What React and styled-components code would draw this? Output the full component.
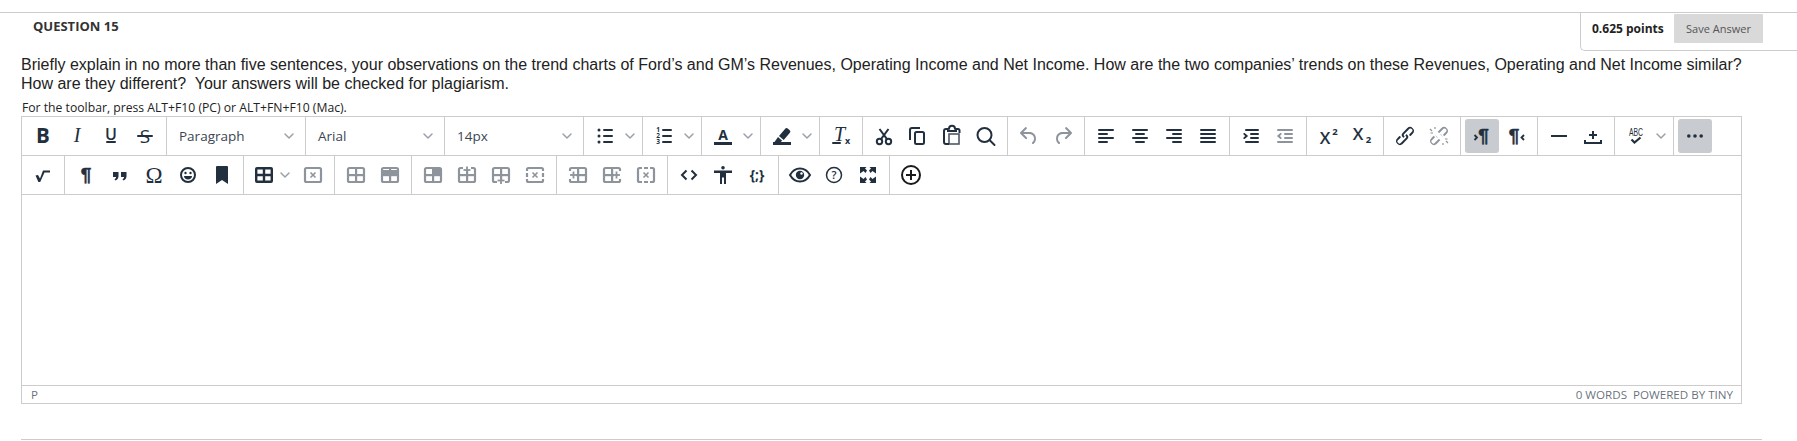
import styled, { createGlobalStyle } from 'styled-components'

const GlobalStyle = createGlobalStyle`
  html, body {
    margin: 0;
    padding: 0;
    background: #fff;
  }
`

const Page = styled.div`
  width: 1797px;
  height: 441px;
  padding-top: 12px;
  box-sizing: border-box;
  overflow: hidden;
  font-family: 'Open Sans', sans-serif;
`
const Header = styled.div`
  display: flex;
  justify-content: space-between;
  height: 38px;
  border-top: 1px solid #ccc;
`
const Title = styled.h3`
  margin: 4px 0 0 33px;
  font-size: 13px;
  line-height: 18px;
  font-weight: 700;
  color: #333;
`
const Points = styled.div`
  display: flex;
  align-items: flex-start;
  width: 217px;
  box-sizing: border-box;
  height: 38px;
  padding: 1px 0 0 11px;
  border-left: 1px solid #ccc;
  border-bottom: 1px solid #ccc;
  border-bottom-left-radius: 5px;
`
const PointsText = styled.span`
  width: 82px;
  font-size: 12px;
  font-weight: 700;
  line-height: 29px;
  color: #222;
  white-space: nowrap;
`
const SaveButton = styled.button`
  width: 89px;
  height: 29px;
  padding: 0;
  border: 0;
  border-radius: 1px;
  background: #d9d9d9;
  color: #555;
  font-family: inherit;
  font-size: 11px;
`
const Content = styled.div`
  padding-left: 22px;
`
const Question = styled.p`
  margin: 4px 0 0 -1px;
  width: 1723px;
  font-family: 'Liberation Sans', Arial, sans-serif;
  font-size: 16px;
  line-height: 19px;
  color: #222;
`
const Hint = styled.div`
  margin-top: 6px;
  font-size: 12.2px;
  line-height: 17px;
  color: #222;
`
const Editor = styled.div`
  width: 1721px;
  margin-left: -1px;
  box-sizing: border-box;
  border: 1px solid #ccc;
`
const Row = styled.div`
  display: flex;
  height: 38px;
  border-bottom: 1px solid #ccc;
`
const Group = styled.div`
  display: flex;
  flex: none;
  padding: 0 4px;
  border-right: ${p => (p.$last ? '0' : '1px solid #ccc')};
`
const ToolButton = styled.div`
  display: flex;
  align-items: center;
  justify-content: center;
  width: ${p => (p.$tight ? 32 : 34)}px;
  height: 34px;
  margin-top: 2px;
  border-radius: 3px;
  background: ${p => (p.$active ? '#c8cbcf' : 'transparent')};
  color: ${p => (p.$muted ? '#8e949b' : p.$ink || '#222f3e')};
`
const SplitArrow = styled.div`
  display: flex;
  align-items: center;
  justify-content: ${p => (p.$tight ? 'flex-start' : 'center')};
  width: 16px;
  height: 34px;
  margin-top: 2px;
  color: rgba(34, 47, 62, 0.45);
`
const Select = styled.div`
  display: flex;
  align-items: center;
  justify-content: space-between;
  width: 130px;
  height: 34px;
  margin-top: 2px;
  padding: 0 7px 0 8px;
  box-sizing: border-box;
  font-size: 13.5px;
  color: #3b4652;
`
const SelectArrow = styled.span`
  color: rgba(34, 47, 62, 0.45);
`
const EditArea = styled.div`
  height: 190px;
  border-bottom: 1px solid #ccc;
`
const StatusBar = styled.div`
  display: flex;
  justify-content: space-between;
  align-items: center;
  height: 17px;
  padding: 0 8px 0 9px;
  font-size: 11.6px;
  color: rgba(34, 47, 62, 0.7);
`
const BottomRule = styled.div`
  width: 1741px;
  margin: 35px 0 0 21px;
  border-top: 1px solid #ccc;
`
const Svg = styled.svg`
  display: block;
  width: ${p => p.$w || 24}px;
  height: ${p => p.$h || 24}px;
  fill: currentColor;
  overflow: visible;
`

const bars = list => list.map(([x, y, w], i) => <rect key={i} x={x} y={y} width={w} height={2} rx={1} />)
const OPEN = "'Open Sans', sans-serif"
const SERIF = "'Liberation Serif', serif"
const ARIAL = "'Liberation Sans', sans-serif"

const grid = (extra, skipH, skipV) => (
  <>
    <rect x="4" y="5" width="16" height="14" rx="1.5" fill="none" stroke="currentColor" strokeWidth="2.2" />
    {!skipH && <rect x="4" y="11" width="16" height="2.2" />}
    {!skipV && <rect x="11" y="5" width="2.2" height="14" />}
    {extra}
  </>
)
const gap = (x, y, w, h) => <rect x={x} y={y} width={w} height={h} fill="#fff" />
const plus = (x, y) => (
  <>
    <rect x={x - 3.5} y={y - 0.9} width="7" height="1.8" />
    <rect x={x - 0.9} y={y - 3.5} width="1.8" height="7" />
  </>
)
const cross = (x, y) => <path d={`M${x - 2.5} ${y - 2.5}l5 5m0-5l-5 5`} stroke="currentColor" strokeWidth="1.6" fill="none" />
const LINK = 'M6.2 12.3a1 1 0 0 1 1.4 1.4l-2.1 2a2 2 0 1 0 2.7 2.8l4.8-4.8a1 1 0 0 0 0-1.4 1 1 0 1 1 1.4-1.3 2.9 2.9 0 0 1 0 4L9.6 20a3.9 3.9 0 0 1-5.5-5.5l2-2.2zm11.6-.6a1 1 0 0 1-1.4-1.4l2-2a2 2 0 1 0-2.6-2.8L11 10.3a1 1 0 0 0 0 1.4A1 1 0 1 1 9.6 13a2.9 2.9 0 0 1 0-4L14.4 4a3.9 3.9 0 0 1 5.5 5.5l-2 2.2z'
const UNDO = 'M6.4 8H12c3.7 0 6.2 2 6.8 5.1.6 2.7-.4 5.6-2.3 6.8a1 1 0 0 1-1-1.8c1.1-.7 1.8-2.7 1.4-4.6-.5-2.1-2.1-3.5-4.9-3.5H6.4l3.3 3.3a1 1 0 1 1-1.4 1.4l-5-5a1 1 0 0 1 0-1.4l5-5a1 1 0 0 1 1.4 1.4L6.4 8z'

const pilcrow = x => (
  <text x={x} y="18" textAnchor="middle" fontFamily={ARIAL} fontWeight="700" fontSize="19" stroke="currentColor" strokeWidth="0.5">¶</text>
)

const icons = {
  bold: <text x="12" y="19" textAnchor="middle" fontFamily={OPEN} fontWeight="700" fontSize="20.5">B</text>,
  italic: <text x="12" y="18" textAnchor="middle" fontFamily={SERIF} fontStyle="italic" fontSize="20">I</text>,
  underline: (
    <>
      <text x="12" y="16" textAnchor="middle" fontFamily={OPEN} fontWeight="600" fontSize="16">U</text>
      {bars([[7, 17, 10]])}
    </>
  ),
  strike: (
    <>
      <text x="12" y="18.5" textAnchor="middle" fontFamily={OPEN} fontSize="19">S</text>
      {bars([[4, 11, 16]])}
    </>
  ),
  bullist: (
    <>
      {bars([[10, 5, 10], [10, 11, 10], [10, 17, 10]])}
      <circle cx="6" cy="6" r="1.5" />
      <circle cx="6" cy="12" r="1.5" />
      <circle cx="6" cy="18" r="1.5" />
    </>
  ),
  numlist: (
    <>
      {bars([[10, 5, 10], [10, 11, 10], [10, 17, 10]])}
      <text x="6" y="8" textAnchor="middle" fontFamily={OPEN} fontWeight="700" fontSize="6.5">1</text>
      <text x="6" y="14" textAnchor="middle" fontFamily={OPEN} fontWeight="700" fontSize="6.5">2</text>
      <text x="6" y="20" textAnchor="middle" fontFamily={OPEN} fontWeight="700" fontSize="6.5">3</text>
    </>
  ),
  forecolor: (
    <>
      <text x="12" y="16" textAnchor="middle" fontFamily={OPEN} fontWeight="700" fontSize="14">A</text>
      <rect x="3" y="18" width="18" height="3" />
    </>
  ),
  backcolor: (
    <>
      <path d="M9 12l6-7a2 2 0 0 1 3-.3l1.5 1.3a2 2 0 0 1 .2 3l-6 7z" />
      <path d="M8 13l4.2 3.8-1.5 1.2H4.5z" />
      <rect x="3" y="18" width="18" height="3" />
    </>
  ),
  clear: (
    <>
      <text x="10.500" y="17" textAnchor="middle" fontFamily={SERIF} fontStyle="italic" fontSize="20">T</text>
      <text x="18.500" y="19.500" textAnchor="middle" fontFamily={OPEN} fontWeight="700" fontSize="9">x</text>
      <rect x="3" y="18" width="9" height="2" rx="1" />
    </>
  ),
  cut: (
    <g fill="none" stroke="currentColor" strokeWidth="2">
      <circle cx="7.5" cy="17.5" r="2.7" />
      <circle cx="16.5" cy="17.5" r="2.7" />
      <path d="M9 15.2L16.5 5M15 15.2L7.5 5" />
    </g>
  ),
  copy: (
    <g fill="none" stroke="currentColor" strokeWidth="2">
      <path d="M14 4H6a2 2 0 0 0-2 2v10" />
      <rect x="9" y="8" width="9" height="12" rx="1.5" />
    </g>
  ),
  paste: (
    <>
      <path
        d="M8 5H6a2 2 0 0 0-2 2v11a2 2 0 0 0 2 2h3M16 5h2a1.5 1.5 0 0 1 1.5 1.5V9M8 5l1-.2a3 3 0 0 1 6 0L16 5v2H8z"
        fill="none"
        stroke="currentColor"
        strokeWidth="2"
      />
      <rect x="9" y="10" width="10" height="10" fill="none" stroke="currentColor" strokeWidth="1.6" opacity="0.8" />
    </>
  ),
  search: (
    <g fill="none" stroke="currentColor" strokeWidth="2">
      <circle cx="10.5" cy="11" r="7" />
      <path d="M15.5 16l5 5" strokeLinecap="round" />
    </g>
  ),
  undo: <path d={UNDO} />,
  redo: <path d={UNDO} transform="matrix(-1 0 0 1 24 0)" />,
  alignleft: bars([[4, 5, 16], [4, 9, 10], [4, 13, 16], [4, 17, 10]]),
  aligncenter: bars([[4, 5, 16], [7, 9, 10], [4, 13, 16], [7, 17, 10]]),
  alignright: bars([[4, 5, 16], [10, 9, 10], [4, 13, 16], [10, 17, 10]]),
  alignjustify: bars([[4, 5, 16], [4, 9, 16], [4, 13, 16], [4, 17, 16]]),
  indent: (
    <>
      {bars([[6, 5, 14], [11, 9, 9], [11, 13, 9], [6, 17, 14]])}
      <path d="M4.4 13.8L6.2 12 4.4 10.2a.9.9 0 0 1 1.2-1.2l3 2.4a.8.8 0 0 1 0 1.2l-3 2.4a.9.9 0 0 1-1.2-1.2z" />
    </>
  ),
  outdent: (
    <>
      {bars([[4, 5, 16], [11, 9, 9], [11, 13, 9], [4, 17, 16]])}
      <path d="M8.6 13.8L6.8 12l1.8-1.8a.9.9 0 0 0-1.2-1.2l-3 2.4a.8.8 0 0 0 0 1.2l3 2.4a.9.9 0 0 0 1.2-1.2z" />
    </>
  ),
  sup: (
    <>
      <text x="9" y="19.500" textAnchor="middle" fontFamily={OPEN} fontWeight="600" fontSize="17">X</text>
      <text x="19" y="11" textAnchor="middle" fontFamily={OPEN} fontWeight="700" fontSize="9.5">2</text>
    </>
  ),
  sub: (
    <>
      <text x="8" y="15.500" textAnchor="middle" fontFamily={OPEN} fontWeight="600" fontSize="17">X</text>
      <text x="18.500" y="19" textAnchor="middle" fontFamily={OPEN} fontWeight="700" fontSize="9.5">2</text>
    </>
  ),
  link: <path d={LINK} />,
  unlink: (
    <>
      <path d={LINK} />
      <path d="M9 9l6 6" stroke="#fff" strokeWidth="4" />
      <path d="M5 7L3 5M8 5V3M19 17l2 2M16 19v2M3.5 9H6M18 15h2.500" stroke="currentColor" strokeWidth="1.2" />
    </>
  ),
  ltr: (
    <>
      {pilcrow(13.500)}
      <path d="M4.500 11l2.500 2.500L4.500 16" fill="none" stroke="currentColor" strokeWidth="1.800" />
    </>
  ),
  rtl: (
    <>
      {pilcrow(10)}
      <path d="M20 11l-2.500 2.500L20 16" fill="none" stroke="currentColor" strokeWidth="1.800" />
    </>
  ),
  hr: <rect x="4" y="11" width="16" height="2" />,
  pagebreak: (
    <>
      <rect x="11" y="7" width="2" height="8" />
      <rect x="8" y="10" width="8" height="2" />
      <path d="M3 16h2v2h14v-2h2v4H3z" />
    </>
  ),
  spell: (
    <>
      <text x="12" y="12" textAnchor="middle" fontFamily={ARIAL} fontSize="11.5" textLength="14" lengthAdjust="spacingAndGlyphs">ABC</text>
      <path d="M7.500 15.500l3 3 6-5" fill="none" stroke="currentColor" strokeWidth="2.200" />
    </>
  ),
  more: (
    <>
      <circle cx="5.800" cy="12" r="1.800" />
      <circle cx="12" cy="12" r="1.800" />
      <circle cx="18.200" cy="12" r="1.800" />
    </>
  ),
  sqrt: <path d="M4.500 12.500l2.500-.6 2 3.600L12 7.500h7v2h-5.500L9.200 19H7.400z" />,
  para: pilcrow(12),
  quote: (
    <>
      <path d="M5 9h5.500v4c0 2-1 3.500-3 4.500l-1-1.300c1-.6 1.500-1.300 1.600-2.200H5z" />
      <path d="M13 9h5.500v4c0 2-1 3.500-3 4.500l-1-1.300c1-.6 1.500-1.300 1.600-2.200H13z" />
    </>
  ),
  omega: <text x="12" y="19.500" textAnchor="middle" fontFamily={SERIF} fontSize="23">Ω</text>,
  emoji: (
    <>
      <circle cx="12" cy="12" r="7" fill="none" stroke="currentColor" strokeWidth="2" />
      <circle cx="9.500" cy="10" r="1.200" />
      <circle cx="14.500" cy="10" r="1.200" />
      <path d="M8 13h8c0 2-1.800 3.500-4 3.500S8 15 8 13z" />
    </>
  ),
  bookmark: <path d="M7 3h10a1 1 0 0 1 1 1v17l-6-4-6 4V4a1 1 0 0 1 1-1z" />,
  table: (
    <path
      fillRule="evenodd"
      d="M5 4h14a2 2 0 0 1 2 2v12a2 2 0 0 1-2 2H5a2 2 0 0 1-2-2V6a2 2 0 0 1 2-2zm.4 2.400v4.400h5.400V6.400zm7.800 0v4.400h5.400V6.400zM5.400 13.200v4.400h5.400v-4.400zm7.800 0v4.400h5.400v-4.400z"
    />
  ),
  tabledel: (
    <>
      <rect x="4" y="5" width="16" height="14" rx="1.500" fill="none" stroke="currentColor" strokeWidth="2.200" />
      {cross(12, 12)}
    </>
  ),
  tablecell: grid(),
  tablerow: grid(<rect x="4" y="7" width="16" height="4" />),
  tablecol: grid(<rect x="12" y="5" width="8" height="7" />),
  rowabove: grid(<>{gap(8, 3, 8, 4)}{plus(12, 7)}</>),
  rowbelow: grid(<>{gap(8, 17, 8, 4)}{plus(12, 17.500)}</>),
  rowdel: grid(<>{gap(7, 9, 10, 6)}{gap(2, 8, 4, 2)}{gap(18, 8, 4, 2)}{gap(2, 14, 4, 2)}{gap(18, 14, 4, 2)}{cross(12, 12)}</>, true, true),
  colleft: grid(<>{gap(2, 8, 8, 8)}{plus(7.500, 12)}</>),
  colright: grid(<>{gap(14, 8, 8, 8)}{plus(16.500, 12)}</>),
  coldel: grid(<>{gap(9, 7, 6, 10)}{gap(8, 3, 2, 4)}{gap(14, 3, 2, 4)}{gap(8, 17, 2, 4)}{gap(14, 17, 2, 4)}{cross(12, 12)}</>, true, true),
  code: <path d="M9.500 7.500L5 12l4.500 4.500M14.500 7.500L19 12l-4.500 4.500" fill="none" stroke="currentColor" strokeWidth="2" />,
  access: (
    <>
      <circle cx="12" cy="4.800" r="1.800" />
      <path d="M3 7.500h18V10h-6v11h-2v-6.500h-2V21H9V10H3z" />
    </>
  ),
  template: <text x="12" y="16.500" textAnchor="middle" fontFamily={OPEN} fontWeight="700" fontSize="13.500">{'{;}'}</text>,
  preview: (
    <>
      <path d="M12 5.500c4.500 0 8 3 10 6.500-2 3.500-5.500 6.500-10 6.500S4 15.500 2 12c2-3.500 5.500-6.500 10-6.500z" fill="none" stroke="currentColor" strokeWidth="2" />
      <circle cx="12" cy="12" r="4.200" />
      <circle cx="13.500" cy="10.500" r="1.200" fill="#fff" />
    </>
  ),
  help: (
    <>
      <circle cx="12" cy="12" r="7.500" fill="none" stroke="currentColor" strokeWidth="1.500" />
      <text x="12" y="16" textAnchor="middle" fontFamily={OPEN} fontWeight="600" fontSize="11">?</text>
    </>
  ),
  fullscreen: (
    <>
      <path d="M4 4h6.500L9 5.500l2 2L9.500 10l-2-2L4 10.500z" />
      <path d="M20 4h-6.500L15 5.500l-2 2 1.500 2.500 2-2 3.500 2.500z" />
      <path d="M4 20h6.500L9 18.500l2-2L9.500 14l-2 2L4 13.500z" />
      <path d="M20 20h-6.500l1.500-1.500-2-2 1.500-2.500 2 2 3.500-2.500z" />
    </>
  ),
  add: (
    <>
      <circle cx="12" cy="12" r="9" fill="none" stroke="currentColor" strokeWidth="2" />
      <rect x="7" y="11" width="10" height="2" />
      <rect x="11" y="7" width="2" height="10" />
    </>
  ),
}

const Chevron = () => (
  <Svg $w={10} $h={6} viewBox="0 0 10 6">
    <path d="M1 1l4 4 4-4" fill="none" stroke="currentColor" strokeWidth="1.500" strokeLinecap="round" strokeLinejoin="round" />
  </Svg>
)

function Tool({ name, split, muted, active, ink, tight }) {
  return (
    <>
      <ToolButton $muted={muted} $active={active} $ink={ink} $tight={tight}>
        <Svg viewBox="0 0 24 24">{icons[name]}</Svg>
      </ToolButton>
      {split && (
        <SplitArrow $tight={tight}>
          <Chevron />
        </SplitArrow>
      )}
    </>
  )
}

function Toolbar({ groups }) {
  return (
    <Row>
      {groups.map((tools, i) => (
        <Group key={i} $last={i === groups.length - 1}>
          {tools.map((t, j) =>
            t.select ? (
              <Select key={j}>
                {t.select}
                <SelectArrow>
                  <Chevron />
                </SelectArrow>
              </Select>
            ) : (
              <Tool key={j} {...t} />
            ),
          )}
        </Group>
      ))}
    </Row>
  )
}

const plain = (...names) => names.map(name => ({ name }))
const muted = (...names) => names.map(name => ({ name, muted: true }))

const firstRow = [
  plain('bold', 'italic', 'underline', 'strike'),
  [{ select: 'Paragraph' }],
  [{ select: 'Arial' }],
  [{ select: '14px' }],
  [{ name: 'bullist', split: true }],
  [{ name: 'numlist', split: true }],
  [{ name: 'forecolor', split: true }],
  [{ name: 'backcolor', split: true }],
  plain('clear'),
  plain('cut', 'copy', 'paste', 'search'),
  muted('undo', 'redo'),
  plain('alignleft', 'aligncenter', 'alignright', 'alignjustify'),
  [{ name: 'indent' }, { name: 'outdent', muted: true }],
  plain('sup', 'sub'),
  [{ name: 'link' }, { name: 'unlink', muted: true }],
  [{ name: 'ltr', active: true }, { name: 'rtl' }],
  plain('hr', 'pagebreak'),
  [{ name: 'spell', split: true }],
  [{ name: 'more', active: true }],
]

const secondRow = [
  plain('sqrt'),
  plain('para', 'quote', 'omega', 'emoji', 'bookmark'),
  [{ name: 'table', split: true, tight: true }, { name: 'tabledel', muted: true }],
  muted('tablecell', 'tablerow'),
  muted('tablecol', 'rowabove', 'rowbelow', 'rowdel'),
  muted('colleft', 'colright', 'coldel'),
  plain('code', 'access', 'template'),
  plain('preview', 'help', 'fullscreen'),
  [{ name: 'add', ink: '#1a1a1a' }],
]

export default function App() {
  return (
    <Page>
      <GlobalStyle />
      <Header>
        <Title>QUESTION 15</Title>
        <Points>
          <PointsText>0.625 points</PointsText>
          <SaveButton>Save Answer</SaveButton>
        </Points>
      </Header>
      <Content>
        <Question>
          Briefly explain in no more than five sentences, your observations on the trend charts of Ford’s and GM’s
          Revenues, Operating Income and Net Income. How are the two companies’ trends on these Revenues, Operating and
          Net Income similar? How are they different?&nbsp; Your answers will be checked for plagiarism.
        </Question>
        <Hint>For the toolbar, press ALT+F10 (PC) or ALT+FN+F10 (Mac).</Hint>
        <Editor>
          <Toolbar groups={firstRow} />
          <Toolbar groups={secondRow} />
          <EditArea />
          <StatusBar>
            <span>P</span>
            <span>0 WORDS&nbsp; POWERED BY TINY</span>
          </StatusBar>
        </Editor>
      </Content>
      <BottomRule />
    </Page>
  )
}
